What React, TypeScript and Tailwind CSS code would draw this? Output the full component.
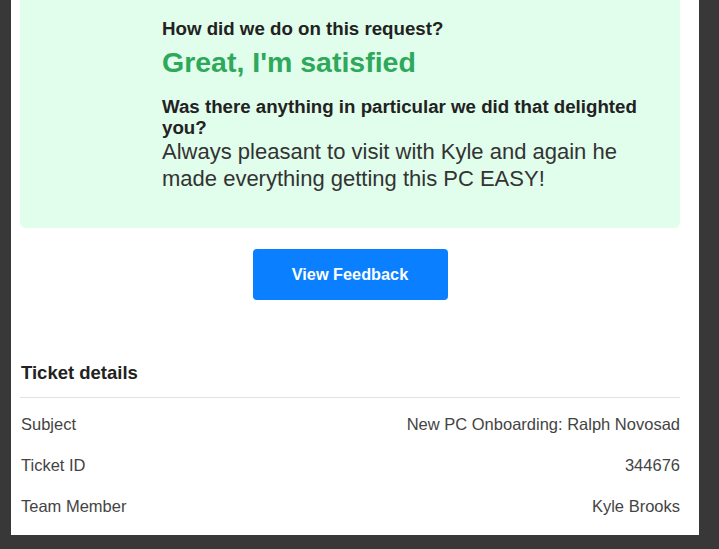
import React from "react";

type T_Row = { label: string; value: string };

const rows: T_Row[] = [
  { label: "Subject", value: "New PC Onboarding: Ralph Novosad" },
  { label: "Ticket ID", value: "344676" },
  { label: "Team Member", value: "Kyle Brooks" },
];

const App: React.FunctionComponent = () => {
  return (
    <div
      className="min-h-screen bg-[#383838] pb-[15px]"
      style={{ fontFamily: '"Liberation Sans", Arial, sans-serif' }}
    >
      <div className="ml-[11px] w-[688px] bg-white pl-[9px] pr-[19px] pb-[9px]">
        {/* feedback box */}
        <div className="rounded-b-md bg-[#e1fdeb] pl-[142px] pt-[18px] pb-[36px]">
          <div className="w-[490px]">
            <p className="text-[18.7px] leading-[22px] font-bold text-[#222]">
              How did we do on this request?
            </p>
            <p className="mt-[5px] text-[28.5px] leading-[34px] font-bold text-[#2ea85a]">
              Great, I'm satisfied
            </p>
            <p className="mt-[17px] text-[18.7px] leading-[21px] font-bold text-[#222]">
              Was there anything in particular we did that delighted you?
            </p>
            <p className="text-[22px] leading-[27px] text-[#333]">
              Always pleasant to visit with Kyle and again he made everything
              getting this PC EASY!
            </p>
          </div>
        </div>

        <div className="flex justify-center pt-[21px]">
          <button className="h-[51px] w-[195px] rounded-[4px] bg-[#0a7fff] text-[16.3px] font-bold text-white">
            View Feedback
          </button>
        </div>

        {/* ticket details */}
        <div className="mt-[62px] pl-px">
          <h2 className="text-[18.5px] leading-[22px] font-bold text-[#222] pb-[13px]">
            Ticket details
          </h2>
        </div>
        <div className="h-px bg-[#e2e2e2]" />
        <div className="pt-[5px]">
          {rows.map((r) => (
            <div
              key={r.label}
              className="flex h-[41px] items-center justify-between pl-px text-[16.5px] leading-[20px] text-[#444]"
            >
              <span>{r.label}</span>
              <span>{r.value}</span>
            </div>
          ))}
        </div>
      </div>
    </div>
  );
};

export default App;
